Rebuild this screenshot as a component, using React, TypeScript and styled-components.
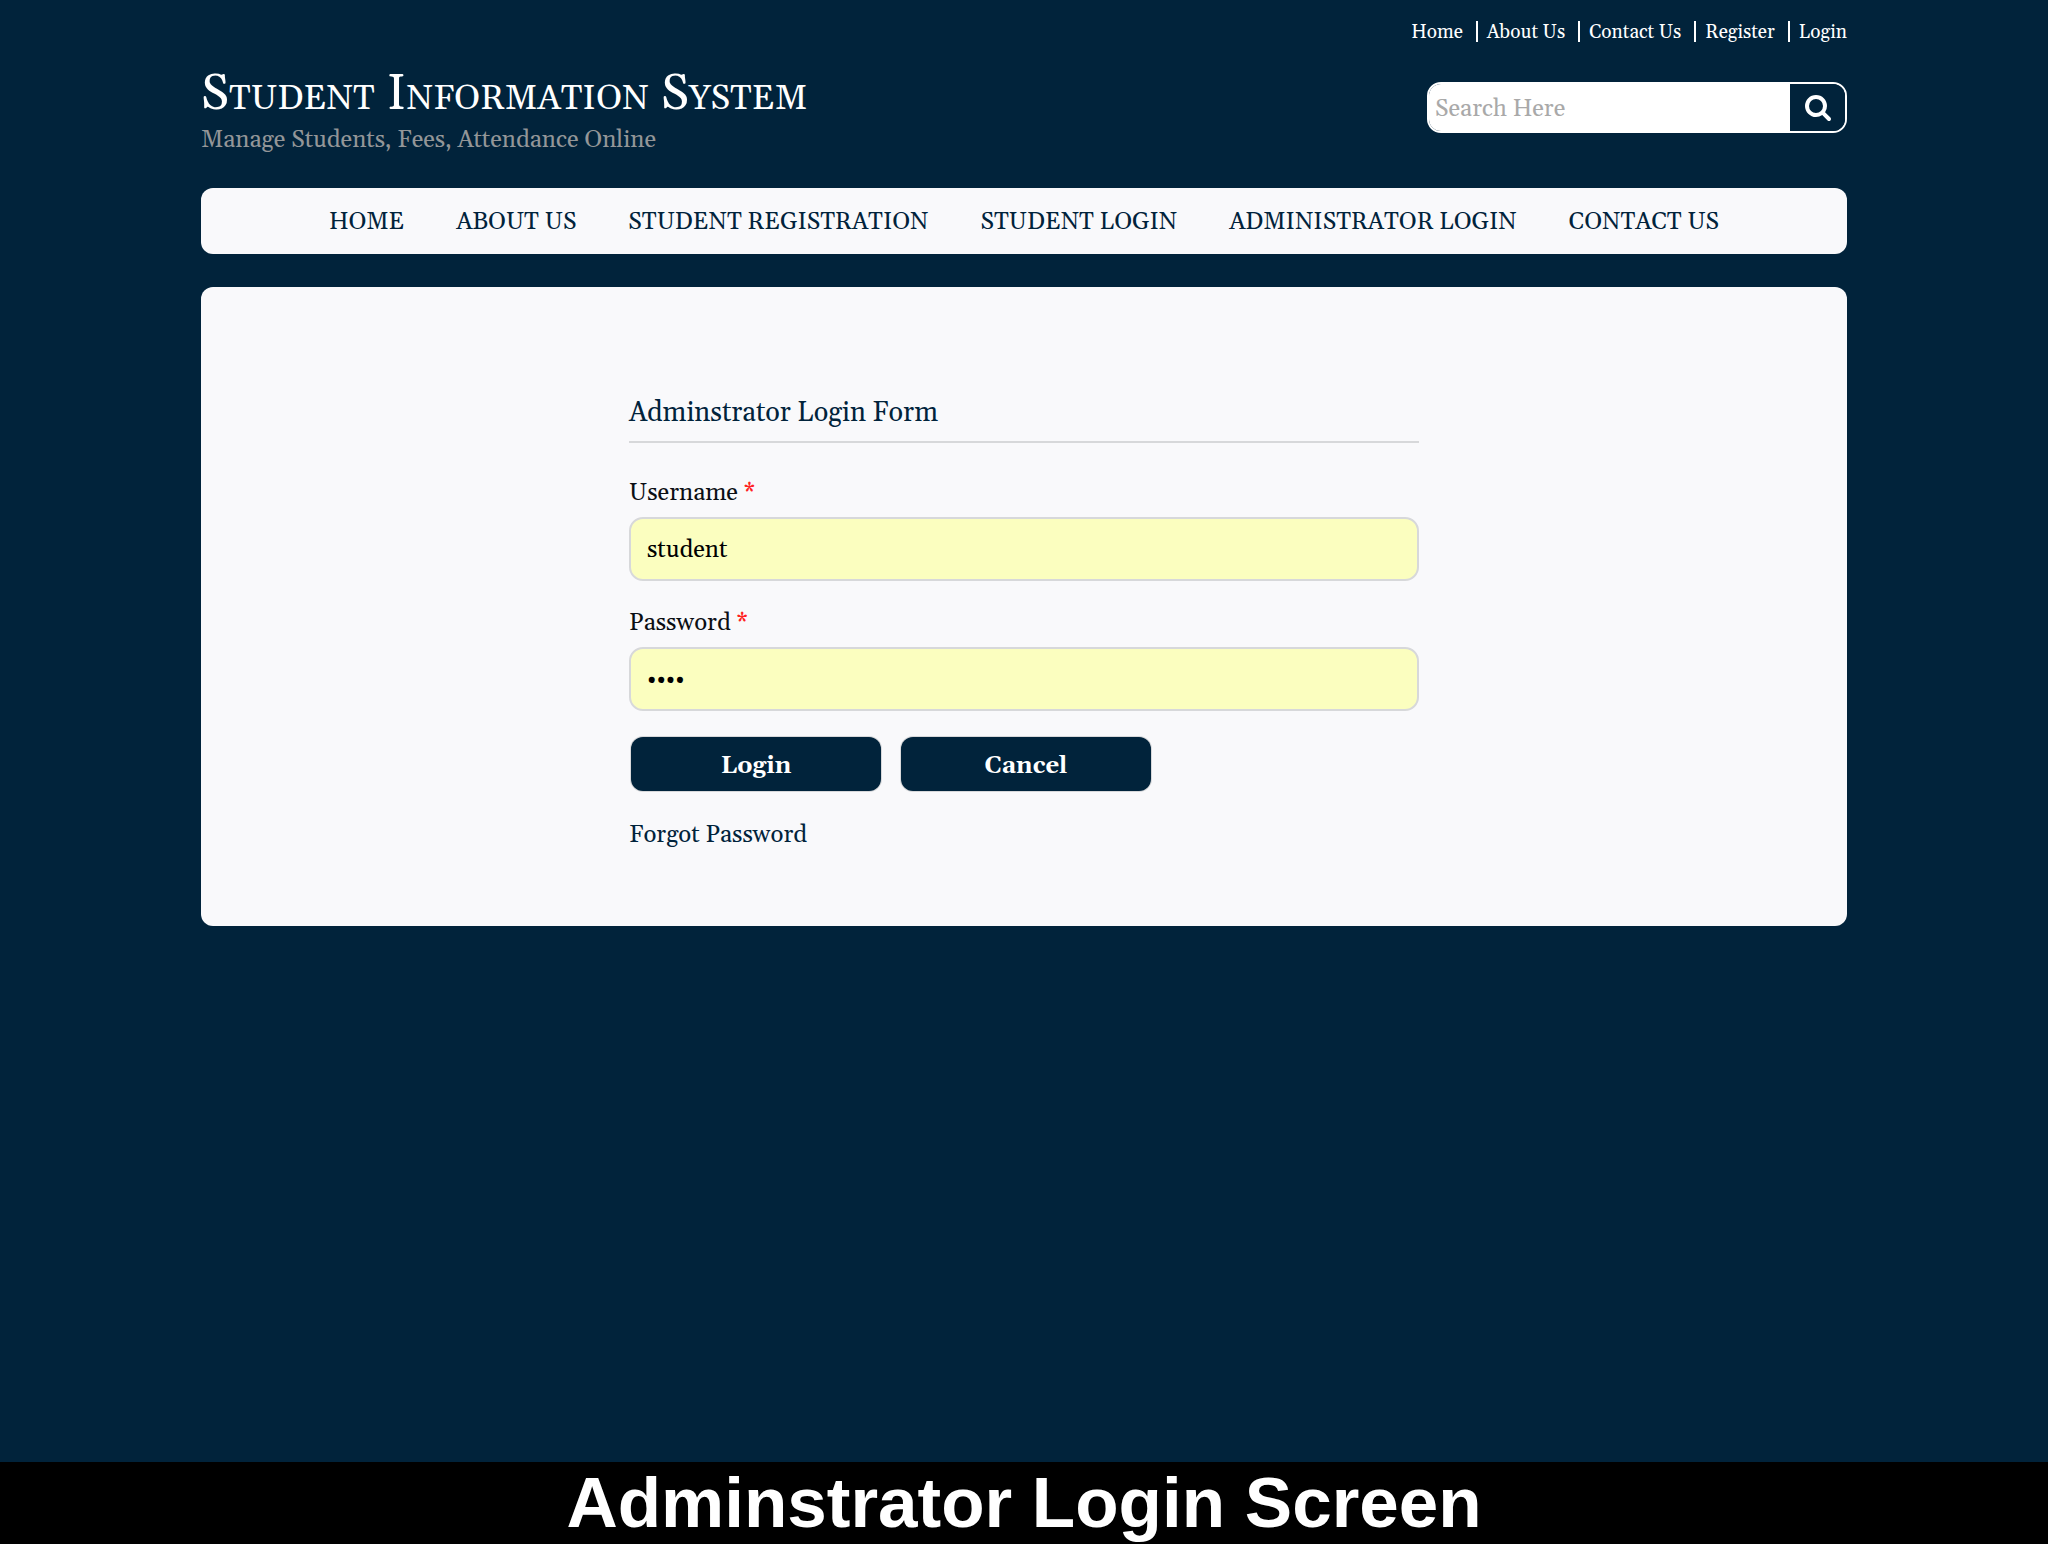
import React from "react";
import styled, { createGlobalStyle } from "styled-components";

const navy = "#01233b";
const panel = "#f9f9fb";
const line = "#d7d8da";
const serif = `Gelasio, Georgia, "Liberation Serif", serif`;

const GlobalStyle = createGlobalStyle`
  *, *::before, *::after { box-sizing: border-box; }
  body { margin: 0; background: ${navy}; font-family: ${serif}; }
  a { color: inherit; text-decoration: none; }
  a:hover { text-decoration: underline; }
  input, button { font-family: inherit; }
`;

const Page = styled.div`
  min-height: 100vh;
  display: flex;
  flex-direction: column;
`;

const Container = styled.div`
  flex: 1;
  width: calc(100% - 48px);
  max-width: 1646px;
  margin: 0 auto;
  padding: 21px 0 32px;
`;

const TopLinks = styled.nav`
  display: flex;
  justify-content: flex-end;
  color: #fff;
  font-size: 19px;
  line-height: 20px;
`;

const TopLink = styled.a`
  padding: 1px 13px 0 9px;
  border-right: 2px solid #fff;

  &:last-child {
    padding-right: 0;
    border-right: 0;
  }
`;

const Header = styled.header`
  display: flex;
  flex-wrap: wrap;
  justify-content: space-between;
  gap: 18px;
  margin: 22px 0 34px;
`;

const SiteTitle = styled.h1`
  margin: 0;
  color: #fff;
  font-size: 50px;
  font-weight: 400;
  font-variant: small-caps;
  line-height: 62px;
`;

const Tagline = styled.p`
  margin: 0;
  color: #939698;
  font-size: 24px;
  line-height: 28px;
`;

const Search = styled.form`
  display: flex;
  width: 420px;
  height: 51px;
  margin-top: 18px;
  overflow: hidden;
  border: 2px solid #fff;
  border-radius: 14px;
`;

const SearchInput = styled.input`
  flex: 1;
  min-width: 0;
  padding: 2px 6px 0;
  border: 0;
  outline: 0;
  background: #fff;
  color: #000;
  font-size: 24px;

  &::placeholder {
    color: #a9a9a9;
    opacity: 1;
  }
`;

const SearchButton = styled.button`
  display: grid;
  place-items: center;
  width: 55px;
  padding: 0;
  border: 0;
  background: ${navy};
  color: #fff;
  cursor: pointer;
`;

const MainNav = styled.nav`
  display: flex;
  flex-wrap: wrap;
  justify-content: center;
  column-gap: 52px;
  padding: 18px 24px 16px;
  margin-bottom: 33px;
  border-radius: 12px;
  background: ${panel};
  color: ${navy};
  font-size: 24px;
  line-height: 32px;
  text-transform: uppercase;
`;

const Card = styled.main`
  padding: 108px 24px 73px;
  border-radius: 12px;
  background: ${panel};
`;

const LoginForm = styled.form`
  max-width: 790px;
  margin: 0 auto;
`;

const FormTitle = styled.h2`
  margin: 0 0 32px;
  padding-bottom: 10px;
  border-bottom: 2px solid ${line};
  color: ${navy};
  font-size: 27px;
  font-weight: 400;
  line-height: 36px;
`;

const Field = styled.div`
  display: flex;
  flex-direction: column;
  gap: 6px;
  margin-bottom: 24px;
`;

const Label = styled.label`
  color: #0b0f14;
  font-size: 24px;
  line-height: 36px;
`;

const Required = styled.span`
  color: #f22;
`;

const TextInput = styled.input`
  width: 100%;
  height: 64px;
  padding: 2px 16px 0;
  border: 2px solid ${line};
  border-radius: 14px;
  outline: 0;
  background: #fbfebf;
  color: #000;
  font-size: 24px;
`;

const Actions = styled.div`
  display: flex;
  gap: 20px;
  margin: 26px 2px;
`;

const ActionButton = styled.button`
  width: 250px;
  height: 54px;
  padding: 4px 0 0;
  border: 0;
  border-radius: 12px;
  box-shadow: 0 0 0 1px ${line};
  background: ${navy};
  color: #fff;
  font-size: 24px;
  font-weight: 700;
  cursor: pointer;
`;

const ForgotLink = styled.a`
  display: block;
  width: fit-content;
  color: ${navy};
  font-size: 24px;
  line-height: 36px;
`;

const Caption = styled.footer`
  background: #000;
  color: #fff;
  font-family: "Liberation Sans", Arial, sans-serif;
  font-size: 71px;
  font-weight: 700;
  line-height: 82px;
  text-align: center;
`;

const SearchIcon = () => (
  <svg width="26" height="26" viewBox="0 128 1664 1664" fill="currentColor" aria-hidden="true">
    <path d="M1152 832q0-185-131.5-316.5t-316.5-131.5-316.5 131.5-131.5 316.5 131.5 316.5 316.5 131.5 316.5-131.5 131.5-316.5zm512 832q0 52-38 90t-90 38q-54 0-90-38l-343-342q-179 124-399 124-143 0-273.5-55.5t-225-150-150-225-55.5-273.5 55.5-273.5 150-225 225-150 273.5-55.5 273.5 55.5 225 150 150 225 55.5 273.5q0 220-124 399l343 343q37 37 37 90z" />
  </svg>
);

const topLinks = ["Home", "About Us", "Contact Us", "Register", "Login"];
const navLinks = [
  "Home",
  "About Us",
  "Student Registration",
  "Student Login",
  "Administrator Login",
  "Contact Us",
];

interface FormFieldProps {
  id: string;
  label: string;
  type: string;
  value: string;
}

const FormField = ({ id, label, type, value }: FormFieldProps) => (
  <Field>
    <Label htmlFor={id}>
      {label} <Required>*</Required>
    </Label>
    <TextInput id={id} name={id} type={type} defaultValue={value} required />
  </Field>
);

export default function App() {
  return (
    <Page>
      <GlobalStyle />
      <Container>
        <TopLinks aria-label="Quick links">
          {topLinks.map((text) => (
            <TopLink key={text} href="#">
              {text}
            </TopLink>
          ))}
        </TopLinks>
        <Header>
          <div>
            <SiteTitle>Student Information System</SiteTitle>
            <Tagline>Manage Students, Fees, Attendance Online</Tagline>
          </div>
          <Search role="search" onSubmit={(e) => e.preventDefault()}>
            <SearchInput type="text" placeholder="Search Here" aria-label="Search" />
            <SearchButton type="submit" aria-label="Search">
              <SearchIcon />
            </SearchButton>
          </Search>
        </Header>
        <MainNav aria-label="Main">
          {navLinks.map((text) => (
            <a key={text} href="#">
              {text}
            </a>
          ))}
        </MainNav>
        <Card>
          <LoginForm onSubmit={(e) => e.preventDefault()}>
            <FormTitle>Adminstrator Login Form</FormTitle>
            <FormField id="username" label="Username" type="text" value="student" />
            <FormField id="password" label="Password" type="password" value="test" />
            <Actions>
              <ActionButton type="submit">Login</ActionButton>
              <ActionButton type="reset">Cancel</ActionButton>
            </Actions>
            <ForgotLink href="#">Forgot Password</ForgotLink>
          </LoginForm>
        </Card>
      </Container>
      <Caption>Adminstrator Login Screen</Caption>
    </Page>
  );
}
